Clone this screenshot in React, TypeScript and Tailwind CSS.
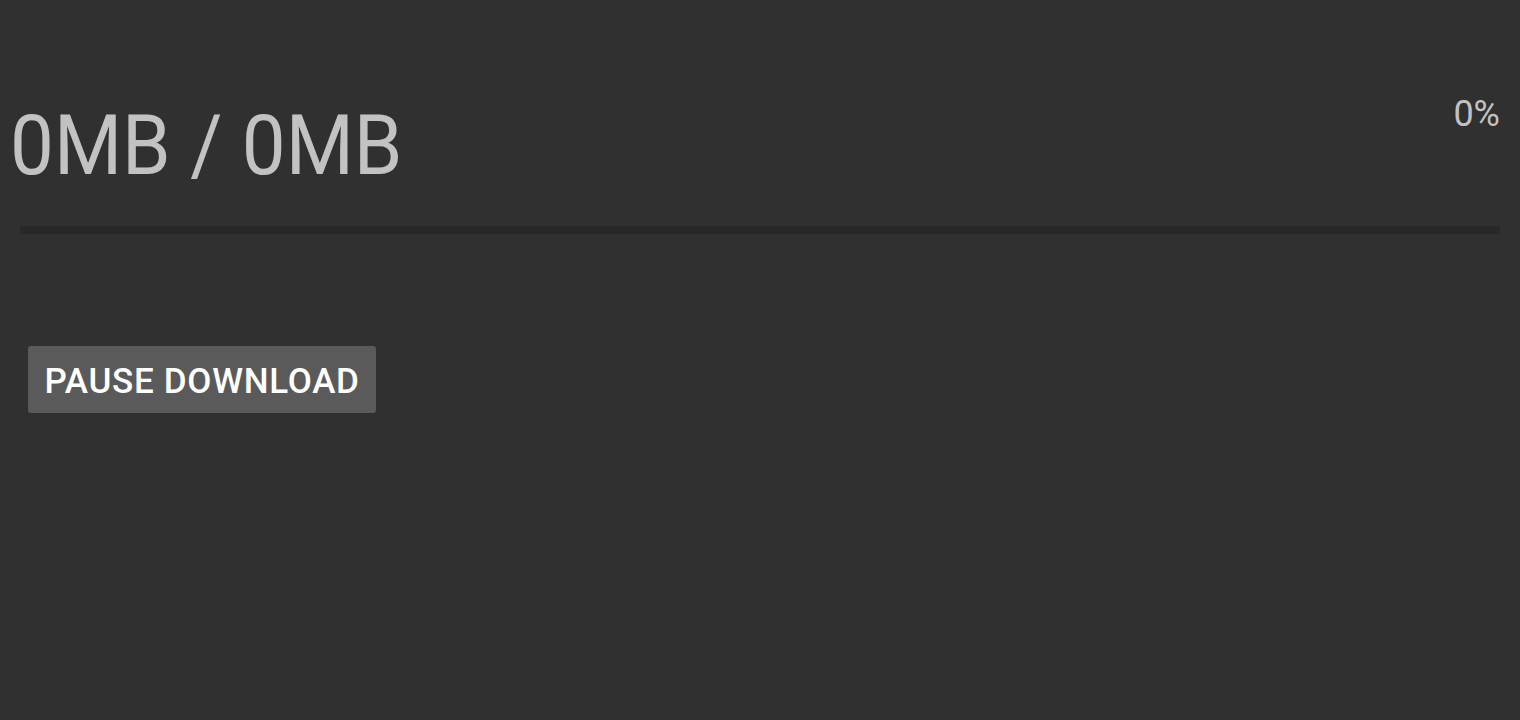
export default function App() {
  return (
    <div className="w-[1520px] h-[720px] bg-[#303030] flex flex-col" style={{ fontFamily: "Roboto, 'Noto Sans', sans-serif" }}>
      <div className="flex justify-between items-start pt-[95px] pl-[10px] pr-[20px]">
        <div className="pt-[9px]">
          <div className="text-[84px] leading-[84px] text-[#c2c2c2] font-normal scale-x-[0.93] origin-left whitespace-nowrap">0MB / 0MB</div>
        </div>
        <div className="text-[36px] leading-[36px] text-[#c2c2c2] pt-[1px]">0%</div>
      </div>
      <div className="mt-[38px] mx-[20px] h-[8px] bg-[#282828] rounded-[2px]" />
      <div className="mt-[112px] pl-[28px]">
        <button className="h-[67px] w-[348px] pt-[5px] bg-[#5a5a5b] rounded-[3px] text-white text-[35px] font-medium tracking-[0.7px] whitespace-nowrap">
          PAUSE DOWNLOAD
        </button>
      </div>
    </div>
  );
}
